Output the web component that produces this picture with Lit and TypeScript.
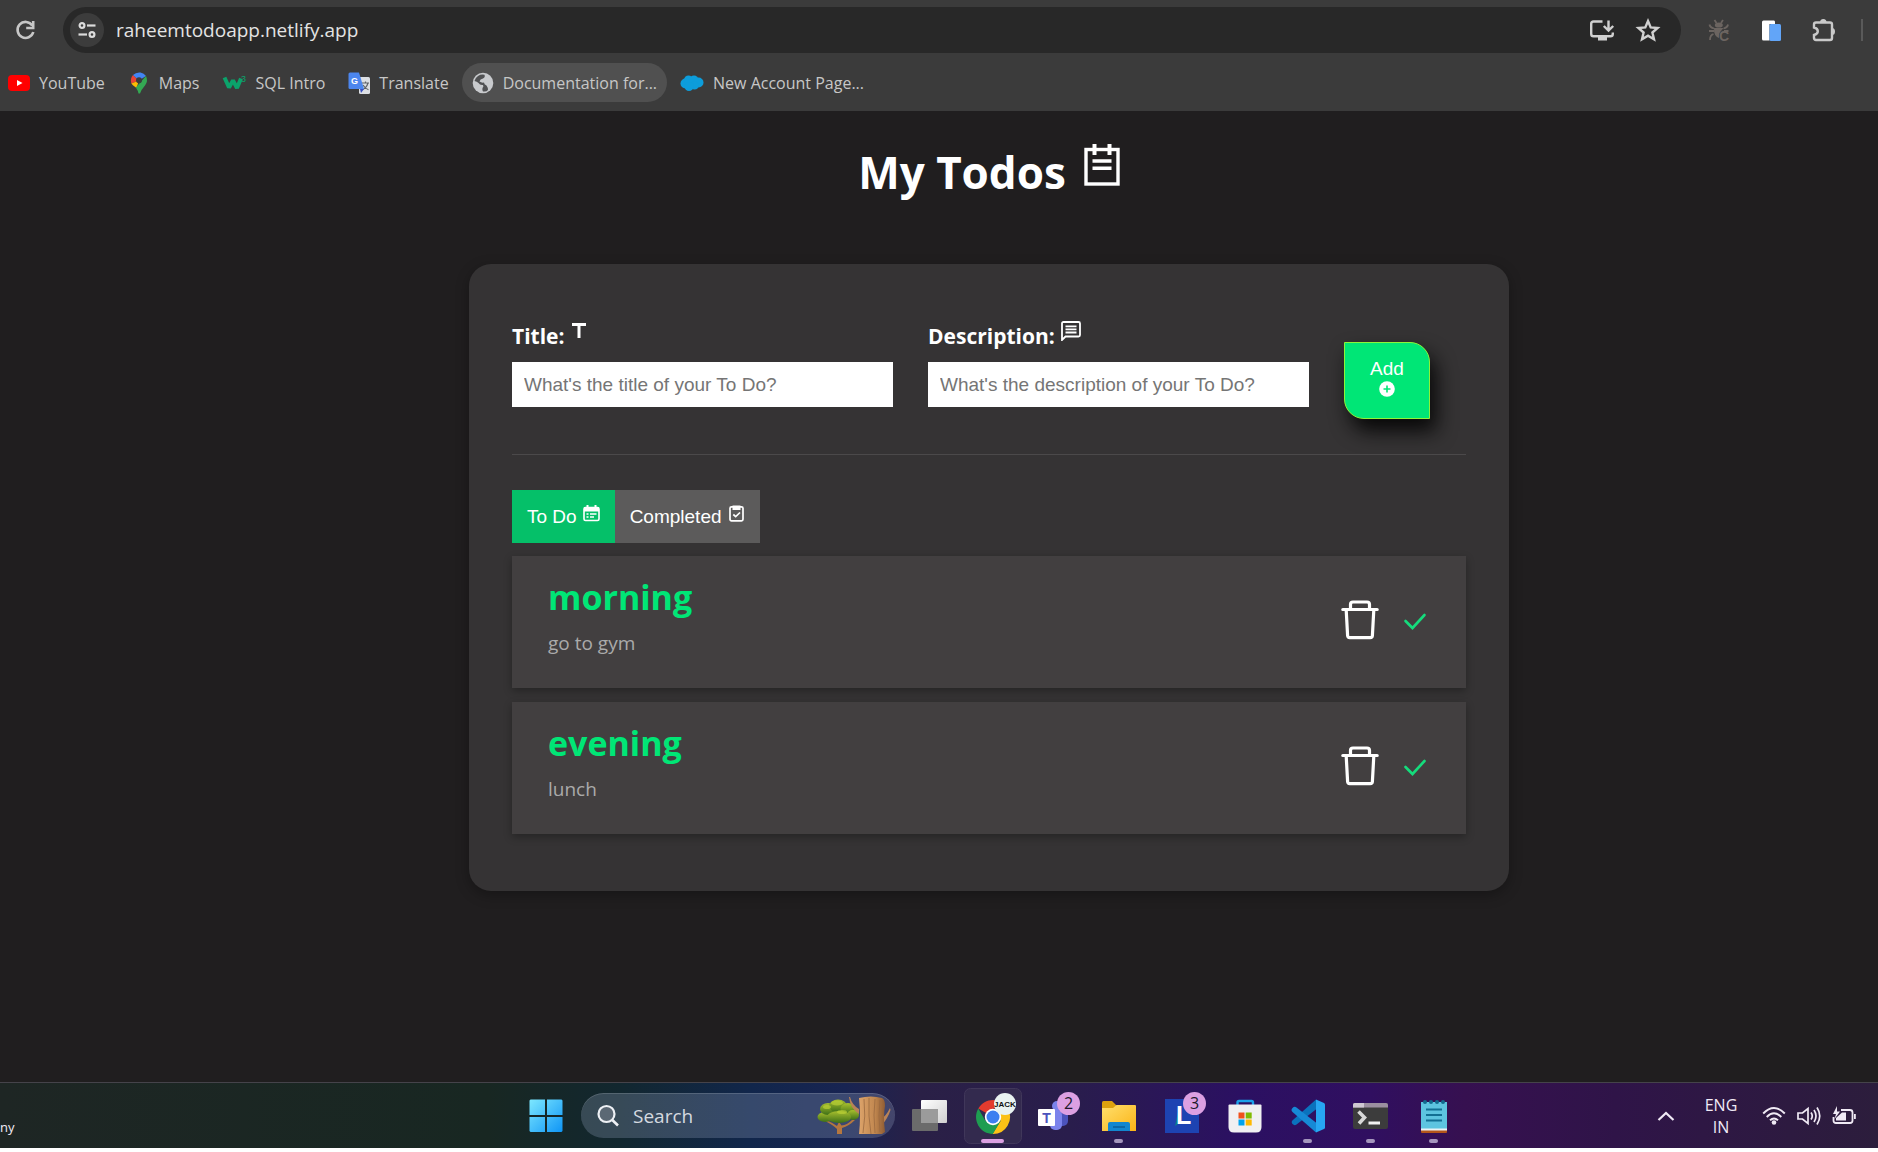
import { LitElement, html, css, svg, nothing, TemplateResult } from "lit";
import { customElement, property, state } from "lit/decorators.js";

const icon = (w: number, h: number, body: unknown) =>
  html`<svg width=${w} height=${h} viewBox="0 0 ${w} ${h}" fill="none" aria-hidden="true">${body}</svg>`;

/* ---------- browser chrome icons ---------- */

const reloadIcon = icon(28, 28, svg`
  <path d="M21.3 9.6 A8 8 0 1 0 22.3 16" stroke="#c7c7c7" stroke-width="2.6"/>
  <path d="M22.2 5 V12 H15.2" stroke="#c7c7c7" stroke-width="2.6"/>`);

const tuneIcon = icon(20, 20, svg`
  <g stroke="#dcdcdc" stroke-width="2.2">
    <circle cx="5" cy="5.5" r="2.4"/><path d="M10 5.5 H18.5"/>
    <circle cx="15" cy="14.5" r="2.4"/><path d="M1.5 14.5 H10"/>
  </g>`);

const installIcon = icon(28, 28, svg`
  <path d="M14.5 5.5 H5.5 Q3.2 5.5 3.2 7.8 V18 Q3.2 20.3 5.5 20.3 H22.5 Q24.8 20.3 24.8 18 V16.5" stroke="#d0d0d0" stroke-width="2.4"/>
  <path d="M10 21 h9 v3.5 h-9z" fill="#d0d0d0"/>
  <path d="M20.5 4.5 V14 M15.8 10 L20.5 14.6 L25.2 10" stroke="#d0d0d0" stroke-width="2.4"/>`);

const starIcon = icon(28, 28, svg`
  <path d="M14 5 L16.7 11.4 L23.6 12 L18.4 16.5 L20 23.3 L14 19.7 L8 23.3 L9.6 16.5 L4.4 12 L11.3 11.4 Z" stroke="#d0d0d0" stroke-width="2.4"/>`);

const bugIcon = icon(28, 28, svg`
  <g stroke="#6b6460" stroke-width="1.8">
    <path d="M9.5 4 L11.5 7 M18 4 L16 7 M4.5 8.5 Q5 11.5 9 12.5 M23 8.5 Q22.5 11.5 18.5 12.5 M4 15 H9 M19 15 H23.5 M8.5 18 Q5 19 5 24"/>
  </g>
  <ellipse cx="13.8" cy="9" rx="4" ry="2.6" fill="#6b6460"/>
  <path d="M9 12 H18.5 L16 15 Q13.5 17 14 22 Q8.5 20 9 12Z" fill="#6b6460"/>
  <text x="14" y="25" font-family="Liberation Sans" font-weight="700" font-size="14" fill="#6b6460">C</text>`);

const pagesIcon = icon(28, 28, svg`
  <path d="M6.5 4.5 H17 Q18 4.5 18 6 V8 H12.5 V24.5 H6.5 Q5 24.5 5 23 V6 Q5 4.5 6.5 4.5Z" fill="#fff"/>
  <rect x="12.5" y="8" width="11.5" height="17" rx="1.5" fill="#62a5f8"/>`);

const puzzleIcon = icon(28, 28, svg`
  <path d="M5 8.5 Q5 6.5 7 6.5 H21 Q23 6.5 23 8.5 V22 Q23 24 21 24 H7 Q5 24 5 22 V19 Q8.8 18 8.8 15.2 Q8.8 12.5 5 11.5 Z" stroke="#c9c9c9" stroke-width="2.4"/>
  <path d="M11 6.5 a3.3 3.6 0 0 1 6.6 0Z M23 12 a3 3.5 0 0 1 0 7Z" fill="#c9c9c9"/>`);

/* ---------- bookmark favicons ---------- */

const youtube = icon(22, 22, svg`
  <rect x="0" y="3" width="22" height="16" rx="4" fill="#f00"/><path d="M9 8 L14.5 11 L9 14Z" fill="#fff"/>`);

const maps = icon(22, 22, svg`
  <path d="M5 3 L11 8.5 L3.3 11.5 Q2 6 5 3Z" fill="#ea4335"/>
  <path d="M5 3 Q8 0 12.5 .5 Q16 1 18 4 L11 8.5Z" fill="#4285f4"/>
  <path d="M3.3 11.5 L11 8.5 L8.5 16 Q4.5 13 3.3 11.5Z" fill="#fbbc04"/>
  <path d="M18 4 Q20.5 9 17 13.5 Q13 18 12 21.5 H10.5 Q10 18.5 7.8 15.5Z" fill="#34a853"/>
  <circle cx="11" cy="8.3" r="3" fill="#3b3b3b"/>`);

const w3 = icon(24, 22, svg`
  <path d="M2.5 5.5 L7 15.5 L11 8.5 L15 16 L19 6.5" stroke="#0ba36b" stroke-width="4" stroke-linejoin="bevel"/>
  <text x="19" y="9.5" font-family="Liberation Sans" font-size="9" fill="#0ba36b">3</text>`);

const translateIcon = icon(22, 22, svg`
  <rect x="11" y="5" width="11" height="17" rx="1.5" fill="#dcdfe4"/>
  <path d="M14 11 H21 M17.5 9.5 V11 M20 11 Q18.5 16 14.5 17.5 M15 13 Q17 16.5 20.5 17.8" stroke="#5f6368" stroke-width="1.2"/>
  <path d="M2 .5 H11 L16 17 H2 Q.5 17 .5 15.5 V2 Q.5 .5 2 .5Z" fill="#4c86ee"/>
  <path d="M12 17 H16 L13 21Z" fill="#3a50c0"/>
  <text x="3" y="12" font-family="Liberation Sans" font-weight="700" font-size="9" fill="#fff">G</text>`);

const globe = icon(22, 22, svg`
  <circle cx="11" cy="11" r="10.3" fill="#c8cacd"/>
  <path d="M2.5 9 Q5 9.5 6.5 11 Q8 13.5 11 13 Q12 14.5 10.5 16 Q10 18 11 19.5 Q14.5 20 16 18 Q16 15.5 14.5 13.5 Q12 12.5 12 10.5 Q9.5 11 7.5 9.5 Q8 7 11 6.5 Q13.5 5.5 12.5 2.8 Q9 2 6 4 Q3 6 2.5 9Z" fill="#505153"/>`);

const cloud = icon(24, 22, svg`
  <g fill="#0d9ddb"><circle cx="5.5" cy="11.5" r="5"/><circle cx="8.5" cy="8" r="4.5"/><circle cx="14" cy="8" r="4.5"/>
  <circle cx="18.5" cy="10.5" r="5"/><circle cx="14.5" cy="13.5" r="4"/><circle cx="9" cy="14.5" r="4.5"/></g>`);

/* ---------- todo page icons ---------- */

const notesIcon = icon(36, 42, svg`
  <rect x="2" y="5.5" width="32" height="34.5" stroke="#fff" stroke-width="3.4"/>
  <path d="M10.5 0 V11 M25.5 0 V11" stroke="#fff" stroke-width="4"/>
  <path d="M8.5 17 H27.5 M8.5 24.3 H27.5" stroke="#fff" stroke-width="3.6"/>`);

const titleIcon = icon(16, 20, svg`<path d="M1 2 H15 V5 H9.5 V17 H6.5 V5 H1Z" fill="#fff"/>`);

const messageIcon = icon(20, 20, svg`
  <path d="M1 19 V2.5 Q1 1 2.5 1 H17.5 Q19 1 19 2.5 V14 Q19 15.5 17.5 15.5 H4.5Z" stroke="#fff" stroke-width="1.8"/>
  <path d="M4.5 5.3 H15.5 M4.5 8.4 H15.5 M4.5 11.5 H15.5" stroke="#fff" stroke-width="1.8"/>`);

const plusIcon = icon(16, 16, svg`
  <circle cx="8" cy="8" r="7.8" fill="#fff"/><path d="M8 4.5 V11.5 M4.5 8 H11.5" stroke="#00e676" stroke-width="1.6"/>`);

const calendarIcon = icon(17, 17, svg`
  <path d="M1 2 H16 V6.5 H1Z" fill="#fff"/><path d="M4.5 0 V4 M12.5 0 V4" stroke="#fff" stroke-width="2"/>
  <rect x="1" y="2.5" width="15" height="13" rx="1.5" stroke="#fff" stroke-width="1.6"/>
  <path d="M3.5 9 H5.5 M7 9 H13.5 M3.5 12 H5.5 M7 12 H11" stroke="#fff" stroke-width="1.5"/>`);

const clipboardIcon = icon(17, 17, svg`
  <rect x="2" y="1.8" width="13" height="14" rx="1.5" stroke="#fff" stroke-width="1.7"/>
  <path d="M4.5 .5 H12.5 V5 H4.5Z" fill="#fff"/>
  <path d="M5.3 9.5 L7.7 11.7 L12 7.5" stroke="#fff" stroke-width="1.7"/>`);

const trashIcon = icon(38, 44, svg`
  <g stroke="#fff" stroke-width="3.2" stroke-linecap="round" stroke-linejoin="round">
    <path d="M1.8 9.5 H36.2 M5.2 10 L6.6 35.5 Q6.7 37.7 8.8 37.7 H29.2 Q31.3 37.7 31.4 35.5 L32.8 10 M9.5 9 V4.500 Q9.500 2 12 2 H26 Q28.500 2 28.500 4.500 V9"/>
  </g>`);

const checkIcon = icon(24, 20, svg`<path d="M2.5 9 L9.5 16 L21.5 3" stroke="#15dc7c" stroke-width="2.6" stroke-linecap="round"/>`);

/* ---------- taskbar icons ---------- */

const windowsIcon = icon(34, 34, svg`
  <defs><linearGradient id="win" x1="0" y1="0" x2="34" y2="34" gradientUnits="userSpaceOnUse"><stop stop-color="#7fe9ff"/><stop offset="1" stop-color="#0c93f5"/></linearGradient></defs>
  <path d="M1.5 .5 H16 V16 H.5 V1.5Z M18 .5 H32.5 L33.5 1.5 V16 H18Z M.5 18 H16 V33 H1.5 L.5 32Z M18 18 H33.5 V32 L32.5 33 H18Z" fill="url(#win)"/>`);

const searchIcon = icon(24, 24, svg`
  <circle cx="10.5" cy="10" r="8" stroke="#eef1f5" stroke-width="2.2" fill="#5b6874"/><path d="M16.3 16 L22 21.5" stroke="#eef1f5" stroke-width="2.6"/>`);

const treeIcon = icon(74, 40, svg`
  <defs>
    <linearGradient id="bark" x1="0" x2="1"><stop stop-color="#dca36a"/><stop offset=".6" stop-color="#c28850"/><stop offset="1" stop-color="#8f5c33"/></linearGradient>
    <linearGradient id="leaf" x1="0" y1="0" x2="0" y2="1"><stop stop-color="#a8bf2e"/><stop offset="1" stop-color="#3d6f17"/></linearGradient>
  </defs>
  <path d="M8 25 Q16 29 20 33 V38 H25 V32 Q32 30 38 24 L35 24 Q30 29 24.5 29.5 L22 26 L20 30 Q14 26 9 24Z" fill="#b5773f"/>
  <g fill="url(#leaf)"><ellipse cx="8" cy="21" rx="7.5" ry="5"/><ellipse cx="11" cy="13" rx="8" ry="6"/><ellipse cx="21" cy="10" rx="9" ry="6.5"/><ellipse cx="31" cy="13" rx="7.5" ry="6"/><ellipse cx="36" cy="19" rx="6" ry="5"/><ellipse cx="22" cy="21" rx="12" ry="6"/></g>
  <g fill="#b9cf35" opacity=".7"><ellipse cx="20" cy="7" rx="6" ry="2.5"/><ellipse cx="10" cy="11" rx="4" ry="2"/><ellipse cx="25" cy="16" rx="5" ry="2"/></g>
  <path d="M33 1 Q35 9 42 13 L42 18 Q33 12 32 1Z M73 12 Q69 20 65 22 V29 Q71 22 73.5 14Z" fill="#b98357"/>
  <path d="M42 2 Q54 -1 65 2 Q68 3 68 10 Q66 20 68 36 L65 38 H42 Q44 20 42 2Z" fill="url(#bark)"/>
  <path d="M47 3 Q49 20 46 37 M52 2 Q51 20 54 38 M58 3 Q56 18 58 37 M63 4 Q61 20 63 36" stroke="#9a6a40" stroke-width=".8"/>`);

const taskViewIcon = icon(35, 34, svg`
  <defs><linearGradient id="tv" x1="0" y1="0" x2="1" y2="1"><stop stop-color="#fff"/><stop offset="1" stop-color="#d0d0d0"/></linearGradient></defs>
  <rect x="9" y="1" width="26" height="23" rx="1" fill="url(#tv)"/><rect x="0" y="10" width="26" height="22" rx="1" fill="#6b6b6b"/><rect x="9" y="10" width="17" height="14" fill="#9b9b9b"/>`);

const chromeIcon = icon(58, 56, svg`
  <rect x=".5" y=".5" width="57" height="55" rx="6" fill="#332a4e" stroke="#40375a"/>
  <path d="M29 29 L14.300 20.500 A17 17 0 0 1 43.700 20.500 H29Z" fill="#e33b2e"/>
  <path d="M43.700 20.500 A17 17 0 0 1 28.500 46 L36.500 33 L34 20.500Z" fill="#fbc116"/>
  <path d="M14.300 20.500 A17 17 0 0 0 28.800 46 L36.500 33 L29 29 L21.500 33Z" fill="#1e9d51"/>
  <circle cx="29" cy="29" r="8.200" fill="#fff"/><circle cx="29" cy="29" r="6.500" fill="#3c7ff0"/>
  <circle cx="41" cy="16" r="11" fill="#e9f3f1"/>
  <text x="41" y="19" text-anchor="middle" font-family="Liberation Sans" font-weight="700" font-size="8" fill="#111">JACK</text>`);

const teamsIcon = icon(36, 36, svg`
  <rect x="15" y="8" width="15" height="20" rx="5" fill="#4b53bc"/><rect x="12" y="12" width="12" height="20" rx="5" fill="#7b83eb"/>
  <circle cx="19" cy="8" r="5" fill="#7b83eb"/>
  <rect x="0" y="11" width="17" height="17" rx="1" fill="#fff"/>
  <text x="8.5" y="24.5" text-anchor="middle" font-family="Liberation Sans" font-weight="700" font-size="14" fill="#4b53bc">T</text>`);

const folderIcon = icon(36, 34, svg`
  <defs><linearGradient id="fo" x1="0" y1="0" x2="1" y2="1"><stop stop-color="#ffdf6d"/><stop offset="1" stop-color="#fbb416"/></linearGradient></defs>
  <path d="M1 3.5 Q1 2 2.5 2 H11 L15 6 V12 H1Z" fill="#dda10e"/><path d="M1 9 H12 L15.5 6 H34 Q35 6 35 7 V32 H1Z" fill="url(#fo)"/>
  <path d="M7 32 V25 Q7 23 9 23 H27 Q29 23 29 25 V32Z" fill="#1286cf"/><path d="M12 28 H24" stroke="#0a5c98" stroke-width="1.5"/>`);

const lIcon = icon(34, 34, svg`
  <rect width="34" height="34" fill="#1d43b2"/><path d="M14 8 L10 27 L13 25Z" fill="#0c7f8c"/>
  <text x="11" y="25" font-family="Liberation Sans" font-weight="700" font-size="25" fill="#fff">L</text>`);

const storeIcon = icon(34, 34, svg`
  <path d="M9.5 8 V3.5 Q9.5 2 11 2 H23.5 Q25 2 25 3.5 V8" stroke="#1ba1ea" stroke-width="2.4"/>
  <path d="M.5 6.5 Q.5 5.5 1.5 5.5 H32.5 Q33.5 5.5 33.5 6.5 V28 Q33.5 33.5 28 33.5 H6 Q.5 33.5 .5 28Z" fill="#f0f0f2"/>
  <path d="M10.5 13.5 h6 v6 h-6z" fill="#f1511b"/><path d="M17.7 13.5 h6 v6 h-6z" fill="#80bb03"/><path d="M10.5 20.5 h6 v6 h-6z" fill="#00a3ee"/><path d="M17.7 20.5 h6 v6 h-6z" fill="#feb902"/>`);

const vscodeIcon = icon(34, 34, svg`
  <path d="M25 .5 L2.5 20.5 Q-.5 22.5 1.5 25 Q3.5 27 5.5 25.5 L25.5 10Z" fill="#0a72bd"/>
  <path d="M25 33.5 L1.5 13 Q-.5 11 1.5 9 Q3.5 7 5.5 8.5 L25.5 24Z" fill="#1689d6"/>
  <path d="M25 .5 L33 4 Q34 4.5 34 6 V28.5 Q34 29.5 33 30 L25 33.5Z" fill="#27a6f2"/>`);

const terminalIcon = icon(35, 28, svg`
  <rect y="1" width="35" height="26" rx="2" fill="#3c3c3c"/><path d="M0 5.5 V3 Q0 1 2 1 H33 Q35 1 35 3 V5.5Z" fill="#9b8fa0"/><path d="M0 5.5 V3 Q0 1 2 1 H11 V5.5Z" fill="#cfc8d2"/>
  <path d="M5.5 9.5 L11.5 15.5 L6 21.5" stroke="#d8d8d8" stroke-width="3.6"/><path d="M15.5 21 H27" stroke="#f2f2f2" stroke-width="3"/>`);

const notepadIcon = icon(26, 34, svg`
  <path d="M0 3 H26 V30 H0Z" fill="#5dc4e0"/><path d="M0 30 H26 V33 Q26 34 25 34 H1 Q0 34 0 33Z" fill="#b4561a"/><path d="M0 29.5 H26 V31.5 H0Z" fill="#e9f2f5"/>
  <g fill="#116b8e"><circle cx="4" cy="3" r="2"/><circle cx="10" cy="3" r="2"/><circle cx="16" cy="3" r="2"/><circle cx="22" cy="3" r="2"/></g>
  <path d="M5 10.5 H21 M5 16 H21 M5 21.5 H21" stroke="#126f93" stroke-width="2"/>`);

const chevronIcon = icon(18, 12, svg`<path d="M1.5 10 L9 3 L16.5 10" stroke="#f0eaf5" stroke-width="2.2"/>`);

const wifiIcon = icon(24, 20, svg`
  <g stroke="#f0eaf5" stroke-width="1.9"><path d="M1.2 7.5 Q12 -3.5 22.8 7.5"/><path d="M4.7 11 Q12 3.5 19.3 11"/><path d="M8 14.3 Q12 10.5 16 14.3"/></g>
  <circle cx="12" cy="16.5" r="2.3" fill="#f0eaf5"/>`);

const speakerIcon = icon(24, 20, svg`
  <g stroke="#f0eaf5" stroke-width="1.7"><path d="M1 7 H5.5 L11 2.5 V17.5 L5.5 13 H1Z"/><path d="M14 6.5 Q16.5 10 14 13.5"/><path d="M17 4 Q21 10 17 16"/><path d="M20 1.5 Q25.5 10 20 18.5"/></g>`);

const batteryIcon = icon(24, 20, svg`
  <path d="M9 4 H18 Q20.5 4 20.5 6.5 V14.5 Q20.5 17 18 17 H4 Q1.5 17 1.5 14.5 V11" stroke="#f0eaf5" stroke-width="1.8"/>
  <path d="M22 8 h1.8 v5 h-1.8z M10 6.5 H14 V14.5 H4 V12Z" fill="#f0eaf5"/><path d="M5 0 L1 8 H4 L2.5 13 L8 5.5 H5Z" fill="#f0eaf5"/>`);

const uiFont = css`"Segoe UI", "Open Sans", "Noto Sans", sans-serif`;
const formFont = css`"Liberation Sans", Arial, sans-serif`;

@customElement("browser-bar")
class BrowserBar extends LitElement {
  static styles = css`
    :host { display: block; background: #3b3b3b; font-family: ${uiFont}; }
    svg { display: block; flex: none; }
    button { display: block; border: 0; padding: 0; background: none; }
    .toolbar { display: flex; align-items: center; gap: 24px; padding: 7px 15px 0 11px; }
    .address { flex: 1; display: flex; align-items: center; height: 46px; padding: 0 19px 0 7px; gap: 12px; border-radius: 23px; background: #282828; }
    .site { display: grid; place-items: center; width: 34px; height: 34px; border-radius: 50%; background: #3c3c3c; }
    .url { flex: 1; min-width: 0; border: 0; padding: 0; outline: 0; background: none; color: #e3e3e3; font: 19px/26px ${uiFont}; }
    .tools { display: flex; gap: 18px; }
    .rule { width: 2px; height: 22px; background: #5a5a5a; }
    .bookmarks { display: flex; gap: 3px; padding: 10px 0 9px; }
    a { display: flex; align-items: center; gap: 9px; height: 39px; padding: 0 10px; border-radius: 20px; color: #c7c7c7; font-size: 16px; text-decoration: none; white-space: nowrap; }
    a.active { background: #505050; }
    .first { padding-left: 8px; }
  `;
  private links: [string, TemplateResult, string][] = [
    ["YouTube", youtube, "first"], ["Maps", maps, ""], ["SQL Intro", w3, ""],
    ["Translate", translateIcon, ""], ["Documentation for...", globe, "active"], ["New Account Page...", cloud, ""],
  ];
  render() {
    return html`
      <div class="toolbar">
        <button aria-label="Reload">${reloadIcon}</button>
        <div class="address">
          <button class="site" aria-label="Site information">${tuneIcon}</button>
          <input class="url" aria-label="Address" .value=${"raheemtodoapp.netlify.app"} />
          <div class="tools">
            <button aria-label="Install app">${installIcon}</button>
            <button aria-label="Bookmark this page">${starIcon}</button>
          </div>
        </div>
        <button aria-label="Debugger">${bugIcon}</button>
        <button aria-label="Pages">${pagesIcon}</button>
        <button aria-label="Extensions">${puzzleIcon}</button>
        <span class="rule"></span>
      </div>
      <nav class="bookmarks">
        ${this.links.map(([name, pic, cls]) => html`<a href="#" class=${cls}>${pic}<span>${name}</span></a>`)}
      </nav>`;
  }
}

@customElement("todo-item")
class TodoItem extends LitElement {
  @property() heading = "";
  @property() detail = "";
  static styles = css`
    :host { display: flex; align-items: center; justify-content: space-between; height: 132px; padding: 0 39px 0 36px; box-sizing: border-box; background: #423f40; box-shadow: 0 3px 8px rgba(0, 0, 0, 0.3); font-family: ${uiFont}; }
    .text { padding-bottom: 14px; }
    h3 { margin: 0; font-size: 34px; line-height: 46px; color: #00e676; }
    p { margin: 0; padding-top: 10px; font-size: 19px; line-height: 26px; color: #aaa; }
    .actions { display: flex; align-items: center; gap: 24px; }
    button { border: 0; padding: 0; background: none; }
    svg { display: block; }
  `;
  render() {
    return html`
      <div class="text"><h3>${this.heading}</h3><p>${this.detail}</p></div>
      <div class="actions">
        <button aria-label="Delete ${this.heading}">${trashIcon}</button>
        <button aria-label="Complete ${this.heading}">${checkIcon}</button>
      </div>`;
  }
}

@customElement("todo-page")
class TodoPage extends LitElement {
  @state() private todos = [
    { heading: "morning", detail: "go to gym" },
    { heading: "evening", detail: "lunch" },
  ];
  static styles = css`
    :host { display: flex; flex-direction: column; align-items: center; padding: 33px 0 48px 100px; background: #201e1f; color: #fff; font-family: ${uiFont}; }
    svg { display: block; flex: none; }
    h1 { display: flex; align-items: flex-start; gap: 18px; margin: 0 0 64px; font-size: 44px; line-height: 56px; }
    .card { width: min(1040px, 100%); box-sizing: border-box; padding: 56px 43px 57px; border-radius: 22px; background: #353334; box-shadow: 0 4px 14px rgba(0, 0, 0, 0.3); }
    form { display: grid; grid-template-columns: 1fr 1fr 86px; column-gap: 35px; padding-right: 36px; padding-bottom: 35px; border-bottom: 1px solid #4b494a; align-items: start; }
    label { display: flex; align-items: flex-start; gap: 6px; height: 42px; font-size: 21px; font-weight: 700; line-height: 32px; }
    label svg { margin-top: 1px; }
    input { display: block; width: 100%; height: 45px; box-sizing: border-box; padding: 0 12px; border: 0; border-radius: 0; background: #fff; color: #222; font: 19px ${formFont}; }
    input::placeholder { color: #757575; opacity: 1; }
    .add { display: flex; flex-direction: column; align-items: center; margin-top: 22px; height: 77px; padding: 14px 0 0; border: 1px solid #8cf53a; border-radius: 0 20px 0 20px; background: #00e676; box-shadow: 6px 12px 20px #080808; color: #fff; font: 19px/24px ${formFont}; }
    .tabs { display: flex; margin: 35px 0 13px; }
    .tab { display: flex; gap: 6px; height: 53px; padding: 15px 15px 0; border: 0; background: #5c5b5b; color: #fff; font: 19px/24px ${formFont}; }
    .tab.on { background: #05c069; }
    .list { display: grid; gap: 14px; }
  `;
  render() {
    return html`
      <h1><span>My Todos</span>${notesIcon}</h1>
      <section class="card">
        <form @submit=${(e: Event) => e.preventDefault()}>
          <div>
            <label for="title">Title: ${titleIcon}</label>
            <input id="title" placeholder="What's the title of your To Do?" />
          </div>
          <div>
            <label for="description">Description: ${messageIcon}</label>
            <input id="description" placeholder="What's the description of your To Do?" />
          </div>
          <button class="add">Add ${plusIcon}</button>
        </form>
        <div class="tabs">
          <button class="tab on">To Do ${calendarIcon}</button>
          <button class="tab">Completed ${clipboardIcon}</button>
        </div>
        <div class="list">
          ${this.todos.map((t) => html`<todo-item .heading=${t.heading} .detail=${t.detail}></todo-item>`)}
        </div>
      </section>`;
  }
}

@customElement("task-bar")
class TaskBar extends LitElement {
  static styles = css`
    :host {
      display: grid; grid-template-columns: calc(50% - 425px) auto 1fr; height: 66px; box-sizing: border-box; border-top: 1px solid #45434a; font-family: ${uiFont}; color: #f0eaf5;
      background: linear-gradient(90deg, #1e2624 0%, #182722 26%, #12272f 33%, #11264b 40%, #182452 45%, #2a2046 49%, #291d4c 57%, #2b1062 66%, #300f60 73%, #361050 78%, #2f1448 86%, #2c1d3c 100%);
    }
    svg { display: block; }
    button { border: 0; padding: 0; background: none; color: inherit; font: inherit; }
    .weather { display: flex; align-items: center; padding-top: 22px; font-size: 13px; }
    .apps { display: flex; align-items: center; }
    .app { position: relative; display: grid; place-items: center; width: 63px; height: 65px; }
    .search { display: flex; align-items: center; gap: 13px; width: 314px; height: 45px; box-sizing: border-box; margin: 0 3px 0 4px; padding: 0 4px 0 15px; border-radius: 23px; background: rgba(150, 165, 195, 0.28); box-shadow: inset 0 1px rgba(255, 255, 255, 0.15); }
    .search input { flex: 1; min-width: 0; border: 0; padding: 0; outline: 0; background: none; font: 19px/26px ${uiFont}; color: #d5dae0; }
    .search input::placeholder { color: #d5dae0; opacity: 1; }
    .badge { position: absolute; right: 7px; top: 9px; width: 23px; height: 23px; border-radius: 50%; background: #dca0e2; color: #20182a; font-size: 16px; line-height: 23px; text-align: center; }
    .mark { position: absolute; left: 50%; bottom: 5px; width: 9px; height: 4px; margin-left: -5px; border-radius: 2px; background: #a596bd; }
    .mark.wide { width: 23px; margin-left: -12px; background: #dca0e2; }
    .tray { display: flex; align-items: center; justify-content: flex-end; padding-right: 22px; }
    .lang { margin: 0 24px 0 29px; font-size: 16px; line-height: 22px; text-align: center; width: 34px; }
    .status { display: flex; gap: 11px; }
  `;
  private apps: { name: string; pic: TemplateResult; badge?: string; mark?: string }[] = [
    { name: "Task view", pic: taskViewIcon },
    { name: "Chrome", pic: chromeIcon, mark: "mark wide" },
    { name: "Teams", pic: teamsIcon, badge: "2" },
    { name: "Files", pic: folderIcon, mark: "mark" },
    { name: "L", pic: lIcon, badge: "3" },
    { name: "Store", pic: storeIcon },
    { name: "Code", pic: vscodeIcon, mark: "mark" },
    { name: "Terminal", pic: terminalIcon, mark: "mark" },
    { name: "Notepad", pic: notepadIcon, mark: "mark" },
  ];
  render() {
    return html`
      <div class="weather">ny</div>
      <div class="apps">
        <button class="app" aria-label="Start">${windowsIcon}</button>
        <div class="search">${searchIcon}<input aria-label="Search" placeholder="Search" />${treeIcon}</div>
        ${this.apps.map((a) => html`
          <button class="app" aria-label=${a.name}>${a.pic}
            ${a.badge ? html`<span class="badge">${a.badge}</span>` : nothing}
            ${a.mark ? html`<span class=${a.mark}></span>` : nothing}
          </button>`)}
      </div>
      <div class="tray">
        <button aria-label="Hidden icons">${chevronIcon}</button>
        <button class="lang">ENG IN</button>
        <button class="status" aria-label="Network, volume and battery">${wifiIcon}${speakerIcon}${batteryIcon}</button>
      </div>`;
  }
}

@customElement("app-root")
class AppRoot extends LitElement {
  static styles = css`
    :host { display: flex; flex-direction: column; min-height: 100vh; box-sizing: border-box; border-bottom: 4px solid #fff; }
    todo-page { flex: 1; }
  `;
  render() {
    return html`<browser-bar></browser-bar><todo-page></todo-page><task-bar></task-bar>`;
  }
}
